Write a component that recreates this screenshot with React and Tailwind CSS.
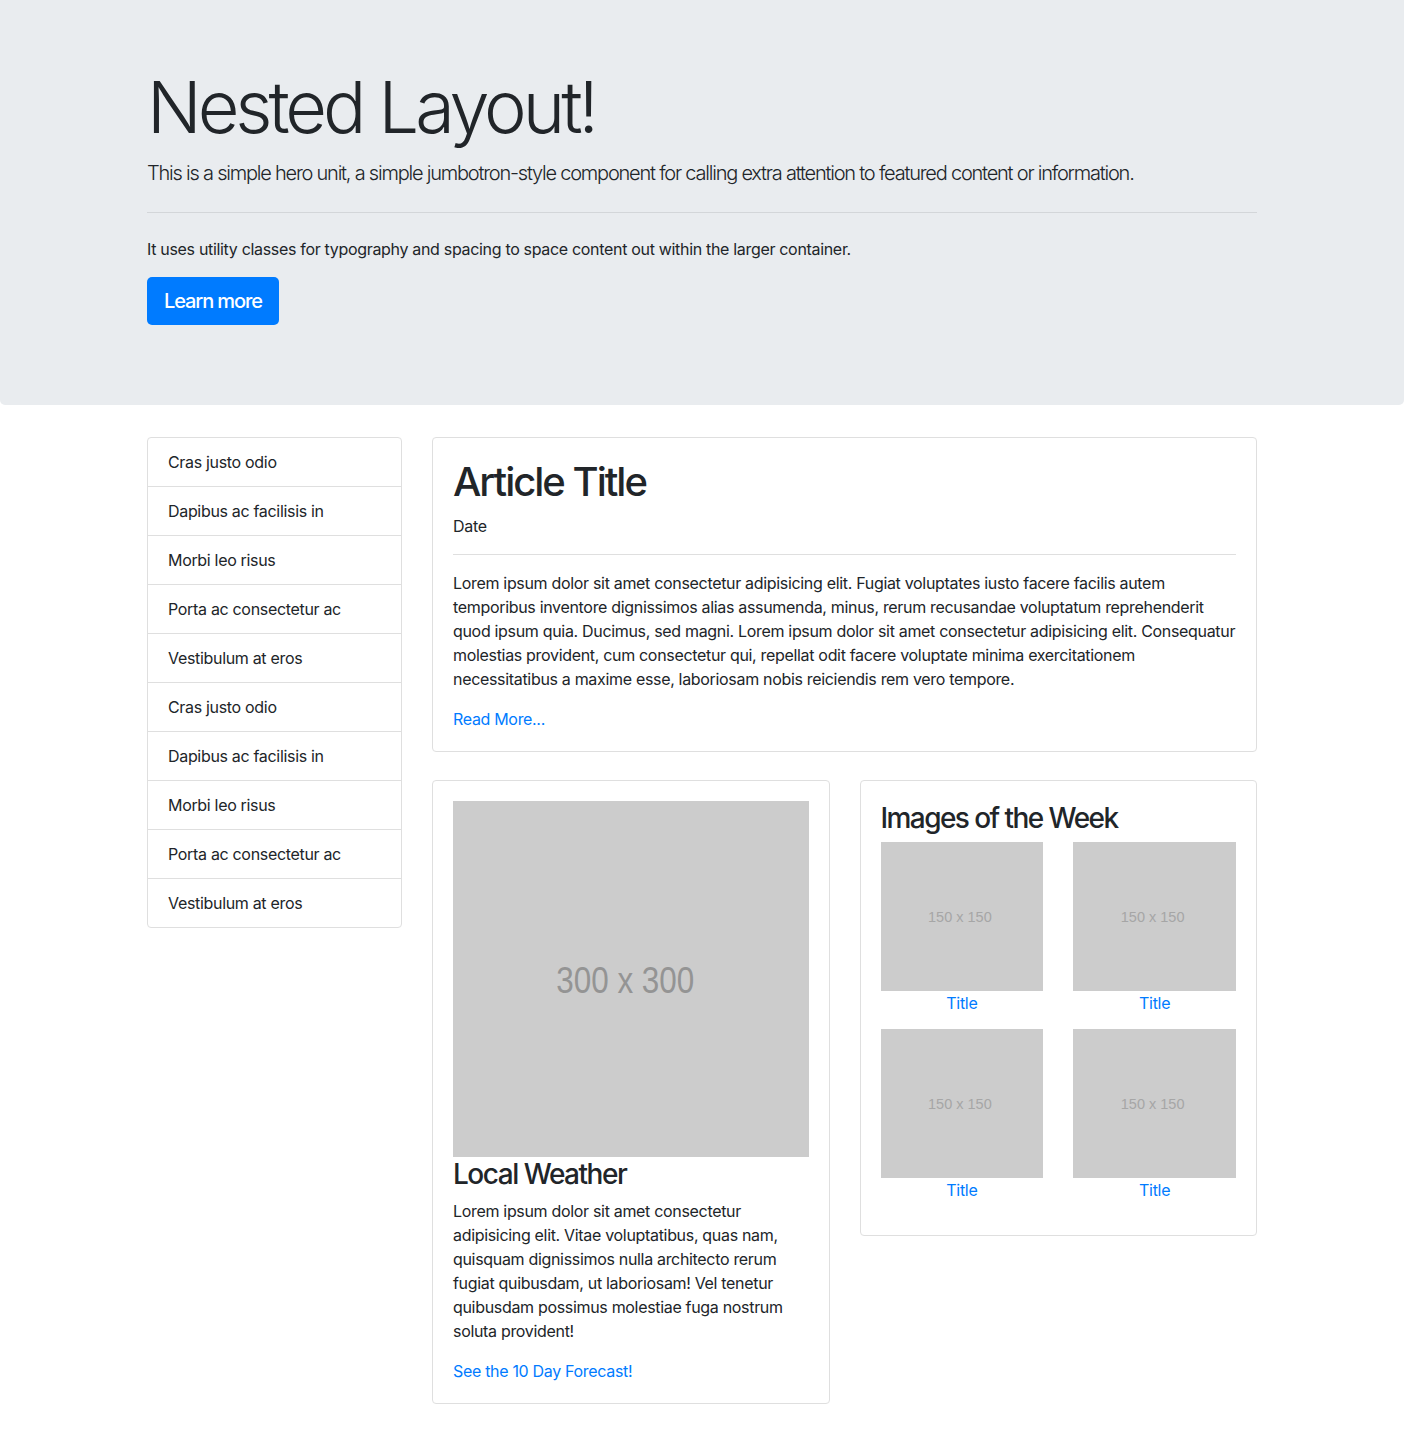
import React from 'react';

const items = [
  'Cras justo odio',
  'Dapibus ac facilisis in',
  'Morbi leo risus',
  'Porta ac consectetur ac',
  'Vestibulum at eros',
  'Cras justo odio',
  'Dapibus ac facilisis in',
  'Morbi leo risus',
  'Porta ac consectetur ac',
  'Vestibulum at eros',
];

function Thumb() {
  return (
    <div className="mb-[14px]">
      <div className="h-[149px] bg-[#cccccc] flex items-center justify-center pr-1 font-['Liberation_Sans',sans-serif] text-[14.5px] tracking-normal text-[#a6a6a6]">
        150 x 150
      </div>
      <div className="text-center leading-6">
        <a href="#" className="text-[#007bff]">Title</a>
      </div>
    </div>
  );
}

export default function App() {
  return (
    <div className="min-h-screen bg-white text-[#212529] text-base leading-6 tracking-[-0.02em] font-['Inter','Liberation_Sans',sans-serif]">
      {/* Jumbotron */}
      <div className="bg-[#e9ecef] rounded-b-[5px] pt-16 pb-16 mb-8">
        <div className="w-[1110px] mx-auto">
          <h1 className="text-[72px] leading-[86px] font-light tracking-[-0.056em] mb-2">Nested Layout!</h1>
          <p className="text-[20px] leading-[30px] font-light tracking-[-0.061em]">
            This is a simple hero unit, a simple jumbotron-style component for calling extra attention to featured content or information.
          </p>
          <hr className="my-6 border-t border-[#d3d6d9]" />
          <p className="mb-4">
            It uses utility classes for typography and spacing to space content out within the larger container.
          </p>
          <p className="mb-4">
            <a href="#" className="inline-block bg-[#007bff] text-white text-[20px] leading-[30px] font-medium px-[17px] py-[9px] rounded-[5px] tracking-[-0.055em]">
              Learn more
            </a>
          </p>
        </div>
      </div>

      {/* Content */}
      <div className="w-[1110px] mx-auto flex gap-[30px] pb-7">
        <div className="w-[255px] shrink-0 self-start">
          <ul className="border border-[#dfdfdf] rounded-[4px] bg-white">
            {items.map((t, i) => (
              <li key={i} className={`px-5 py-3 ${i > 0 ? 'border-t border-[#dfdfdf]' : ''}`}>
                {t}
              </li>
            ))}
          </ul>
        </div>

        <div className="flex-1 min-w-0">
          <div className="border border-[#dfdfdf] rounded-[4px] p-5">
            <h1 className="text-[40px] leading-[48px] font-medium mb-2 tracking-[-0.05em]">Article Title</h1>
            <p>Date</p>
            <hr className="my-4 border-t border-[#dfdfdf]" />
            <p className="mb-4">
              Lorem ipsum dolor sit amet consectetur adipisicing elit. Fugiat voluptates iusto facere facilis autem temporibus inventore dignissimos alias assumenda, minus, rerum recusandae voluptatum reprehenderit quod ipsum quia. Ducimus, sed magni. Lorem ipsum dolor sit amet consectetur adipisicing elit. Consequatur molestias provident, cum consectetur qui, repellat odit facere voluptate minima exercitationem necessitatibus a maxime esse, laboriosam nobis reiciendis rem vero tempore.
            </p>
            <a href="#" className="text-[#007bff]">Read More...</a>
          </div>

          <div className="mt-[28px] grid grid-cols-2 gap-[30px] items-start">
            <div className="border border-[#dfdfdf] rounded-[4px] p-5">
              <div className="aspect-square bg-[#cccccc] flex items-center justify-center pr-[10px] pt-1">
                <span className="font-['Liberation_Sans',sans-serif] text-[37px] tracking-normal text-[#949494] scale-x-[0.85] inline-block">
                  300 x 300
                </span>
              </div>
              <h3 className="text-[28px] leading-[34px] font-medium mb-2 tracking-[-0.053em]">Local Weather</h3>
              <p className="mb-4">
                Lorem ipsum dolor sit amet consectetur adipisicing elit. Vitae voluptatibus, quas nam, quisquam dignissimos nulla architecto rerum fugiat quibusdam, ut laboriosam! Vel tenetur quibusdam possimus molestiae fuga nostrum soluta provident!
              </p>
              <a href="#" className="text-[#007bff]">See the 10 Day Forecast!</a>
            </div>

            <div className="border border-[#dfdfdf] rounded-[4px] px-5 pt-5 pb-[19px]">
              <h3 className="text-[28px] leading-[34px] font-medium mb-[7px] tracking-[-0.056em]">Images of the Week</h3>
              <div className="grid grid-cols-2 gap-x-[30px]">
                <Thumb />
                <Thumb />
                <Thumb />
                <Thumb />
              </div>
            </div>
          </div>
        </div>
      </div>
    </div>
  );
}
